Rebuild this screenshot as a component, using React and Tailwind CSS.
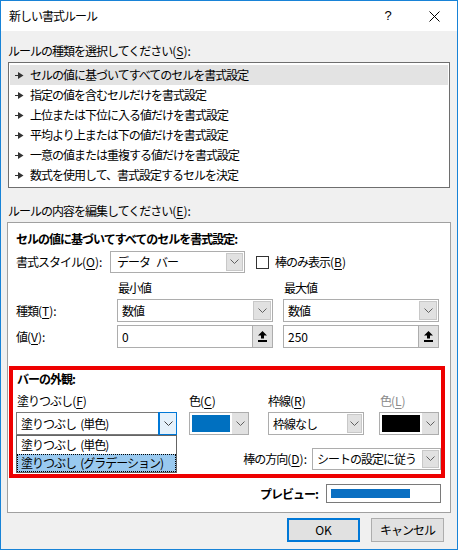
import React from "react";

function Chevron({ color = "#606060" }) {
  return (
    <svg width="9" height="6" viewBox="0 0 9 6">
      <path d="M0.5 0.5 L4.5 4.5 L8.5 0.5" fill="none" stroke={color} strokeWidth="1" />
    </svg>
  );
}

function UpArrow() {
  return (
    <svg width="9" height="11" viewBox="0 0 9 11">
      <path d="M4.5 0 L9 4.5 L6 4.5 L6 7.5 L3 7.5 L3 4.5 L0 4.5 Z" fill="#000" />
      <rect x="0" y="9" width="9" height="2" fill="#000" />
    </svg>
  );
}

function ListArrow() {
  return (
    <svg width="9" height="7" viewBox="0 0 9 7">
      <rect x="0" y="3" width="4" height="1" fill="#333" />
      <path d="M3 0 L8.5 3.5 L3 7 Z" fill="#333" />
    </svg>
  );
}

function A({ k, colon = true }) {
  return (
    <span className="tracking-[0px]">
      (<span className="underline underline-offset-2">{k}</span>){colon ? ":" : ""}
    </span>
  );
}

const items = [
  "セルの値に基づいてすべてのセルを書式設定",
  "指定の値を含むセルだけを書式設定",
  "上位または下位に入る値だけを書式設定",
  "平均より上または下の値だけを書式設定",
  "一意の値または重複する値だけを書式設定",
  "数式を使用して、書式設定するセルを決定",
];

export default function App() {
  return (
    <div className="w-[458px] h-[550px] border border-[#1883d7] bg-[#f0f0f0] flex flex-col text-[12px] leading-[16px] text-black tracking-[-1px] font-['Noto_Sans_CJK_JP','Noto_Sans',sans-serif] overflow-hidden">
      {/* Title bar */}
      <div className="h-[30px] bg-white flex items-center shrink-0">
        <div className="pl-[8px]">新しい書式ルール</div>
        <div className="ml-auto w-[46px] h-full flex items-center justify-center tracking-normal text-[13px] font-['Liberation_Sans',sans-serif]">?</div>
        <div className="w-[46px] h-full flex items-center justify-center">
          <svg width="11" height="11" viewBox="0 0 11 11">
            <path d="M0.5 0.5 L10.5 10.5 M10.5 0.5 L0.5 10.5" stroke="#000" strokeWidth="1" />
          </svg>
        </div>
      </div>

      {/* Body */}
      <div className="flex flex-col px-[6px]">
        <div className="mt-[12px] pl-[1px] h-[16px]">
          ルールの種類を選択してください<A k="S" />
        </div>
        <div className="mt-[3px] ml-[1px] w-[442px] h-[126px] border border-[#6e6e6e] bg-white pt-[2px] px-[1px]">
          {items.map((t, i) => (
            <div
              key={i}
              className={
                i === 0
                  ? "h-[20px] flex items-center bg-[#e3e3e3]"
                  : "h-[20px] flex items-center"
              }
            >
              <span className="ml-[5px] mr-[6px] flex items-center">
                <ListArrow />
              </span>
              <span>{t}</span>
            </div>
          ))}
        </div>

        <div className="mt-[15px] pl-[1px] h-[16px]">
          ルールの内容を編集してください<A k="E" />
        </div>

        {/* Panel */}
        <div className="mt-[3px] w-[444px] h-[291px] border border-[#a0a0a0] bg-white flex flex-col">
          <div className="pl-[8px] pt-[8px] font-bold h-[24px]">セルの値に基づいてすべてのセルを書式設定:</div>

          <div className="pl-[8px] mt-[4px] flex items-center h-[22px]">
            <div className="w-[94px]">書式スタイル<A k="O" /></div>
            <div className="w-[135px] h-[22px] flex border border-[#adadad] bg-white">
              <div className="flex-1 flex items-center pl-[6px]">データ<span className="w-[6px]"></span>バー</div>
              <div className="w-[17px] m-[1px] bg-[#e1e1e1] border border-[#c8c8c8] flex items-center justify-center">
                <Chevron />
              </div>
            </div>
            <div className="ml-[11px] w-[13px] h-[13px] border border-[#333] bg-white"></div>
            <div className="ml-[6px]">棒のみ表示<A k="B" colon={false} /></div>
          </div>

          <div className="pl-[8px] mt-[7px] flex h-[16px]">
            <div className="w-[102px]"></div>
            <div className="w-[166px]">最小値</div>
            <div>最大値</div>
          </div>

          <div className="pl-[8px] mt-[3px] flex items-center h-[23px]">
            <div className="w-[101px]">種類<A k="T" /></div>
            <div className="w-[156px] h-[23px] flex border border-[#adadad] bg-white">
              <div className="flex-1 flex items-center pl-[4px]">数値</div>
              <div className="w-[18px] m-[1px] bg-[#e1e1e1] border border-[#c8c8c8] flex items-center justify-center">
                <Chevron />
              </div>
            </div>
            <div className="ml-[10px] w-[156px] h-[23px] flex border border-[#adadad] bg-white">
              <div className="flex-1 flex items-center pl-[4px]">数値</div>
              <div className="w-[18px] m-[1px] bg-[#e1e1e1] border border-[#c8c8c8] flex items-center justify-center">
                <Chevron />
              </div>
            </div>
          </div>

          <div className="pl-[8px] mt-[3px] flex items-center h-[23px]">
            <div className="w-[101px]">値<A k="V" /></div>
            <div className="w-[156px] h-[23px] flex border border-[#adadad] bg-white">
              <div className="flex-1 flex items-center pl-[4px] tracking-[0px]">0</div>
              <div className="w-[20px] bg-[#e1e1e1] border-l border-[#adadad] flex items-center justify-center">
                <UpArrow />
              </div>
            </div>
            <div className="ml-[10px] w-[156px] h-[23px] flex border border-[#adadad] bg-white">
              <div className="flex-1 flex items-center pl-[4px] tracking-[0px]">250</div>
              <div className="w-[20px] bg-[#e1e1e1] border-l border-[#adadad] flex items-center justify-center">
                <UpArrow />
              </div>
            </div>
          </div>

          {/* Red highlight box */}
          <div className="mt-[18px] ml-[1px] w-[436px] h-[112px] border-4 border-[#ee0000] flex flex-col">
            <div className="pl-[4px] pt-[1px] font-bold h-[17px]">バーの外観:</div>
            <div className="pl-[3px] mt-[6px] flex">
              <div className="flex flex-col w-[161px]">
                <div className="pl-[1px] h-[16px]">塗りつぶし<A k="F" colon={false} /></div>
                <div className="relative mt-[3px] w-[161px] h-[23px] flex border border-[#7a7a7a] bg-white">
                  <div className="flex-1 flex items-center pl-[4px]">塗りつぶし<span className="w-[4px]"></span>(単色)</div>
                  <div className="w-[17px] bg-[#e5f1fb] border-l border-[#0078d7] outline outline-1 outline-[#0078d7] flex items-center justify-center">
                    <Chevron color="#404040" />
                  </div>
                  <div className="absolute left-[-1px] top-[22px] w-[161px] h-[38px] border border-[#646464] bg-white flex flex-col z-10">
                    <div className="h-[18px] flex items-center pl-[4px]">塗りつぶし<span className="w-[4px]"></span>(単色)</div>
                    <div className="h-[18px] flex items-center pl-[3px] bg-[#99c9ef] border border-dotted border-black">
                      塗りつぶし<span className="w-[4px]"></span>(グラデーション)
                    </div>
                  </div>
                </div>
              </div>

              <div className="ml-[12px] flex flex-col w-[60px]">
                <div className="h-[16px]">色<A k="C" colon={false} /></div>
                <div className="mt-[3px] w-[60px] h-[23px] flex border border-[#adadad] bg-[#e1e1e1]">
                  <div className="w-[42px] bg-white p-[2px]">
                    <div className="w-full h-full bg-[#0070c0]"></div>
                  </div>
                  <div className="flex-1 flex items-center justify-center">
                    <Chevron />
                  </div>
                </div>
              </div>

              <div className="ml-[19px] flex flex-col w-[96px]">
                <div className="h-[16px]">枠線<A k="R" colon={false} /></div>
                <div className="mt-[3px] w-[96px] h-[23px] flex border border-[#adadad] bg-white">
                  <div className="flex-1 flex items-center pl-[4px]">枠線なし</div>
                  <div className="w-[15px] m-[1px] bg-[#e1e1e1] border border-[#c8c8c8] flex items-center justify-center">
                    <Chevron />
                  </div>
                </div>
              </div>

              <div className="ml-[15px] flex flex-col w-[60px]">
                <div className="pl-[1px] h-[16px] text-[#8a8a8a]">色<A k="L" colon={false} /></div>
                <div className="mt-[3px] w-[60px] h-[23px] flex border border-[#adadad] bg-[#e1e1e1]">
                  <div className="w-[42px] bg-white p-[2px]">
                    <div className="w-full h-full bg-black"></div>
                  </div>
                  <div className="flex-1 flex items-center justify-center">
                    <Chevron />
                  </div>
                </div>
              </div>
            </div>

            <div className="mt-[13px] flex items-center justify-end h-[22px]">
              <div className="mr-[5px]">棒の方向<A k="D" /></div>
              <div className="w-[129px] h-[22px] flex border border-[#adadad] bg-white">
                <div className="flex-1 flex items-center pl-[4px]">シートの設定に従う</div>
                <div className="w-[17px] m-[1px] bg-[#e1e1e1] border border-[#c8c8c8] flex items-center justify-center">
                  <Chevron />
                </div>
              </div>
            </div>
          </div>

          <div className="mt-[6px] flex items-center justify-end pr-[9px] h-[19px]">
            <div className="mr-[8px] font-bold">プレビュー:</div>
            <div className="w-[115px] h-[19px] border border-[#7a7a7a] bg-white flex items-center pl-[4px]">
              <div className="w-[79px] h-[9px] bg-[#0a6fc2]"></div>
            </div>
          </div>
        </div>

        {/* Buttons */}
        <div className="mt-[5px] flex justify-end pr-[7px] gap-[11px]">
          <div className="w-[73px] h-[24px] border-2 border-[#0078d7] bg-[#e1e1e1] flex items-center justify-center tracking-normal">
            OK
          </div>
          <div className="w-[73px] h-[24px] border border-[#adadad] bg-[#e1e1e1] flex items-center justify-center">
            キャンセル
          </div>
        </div>
      </div>
    </div>
  );
}
